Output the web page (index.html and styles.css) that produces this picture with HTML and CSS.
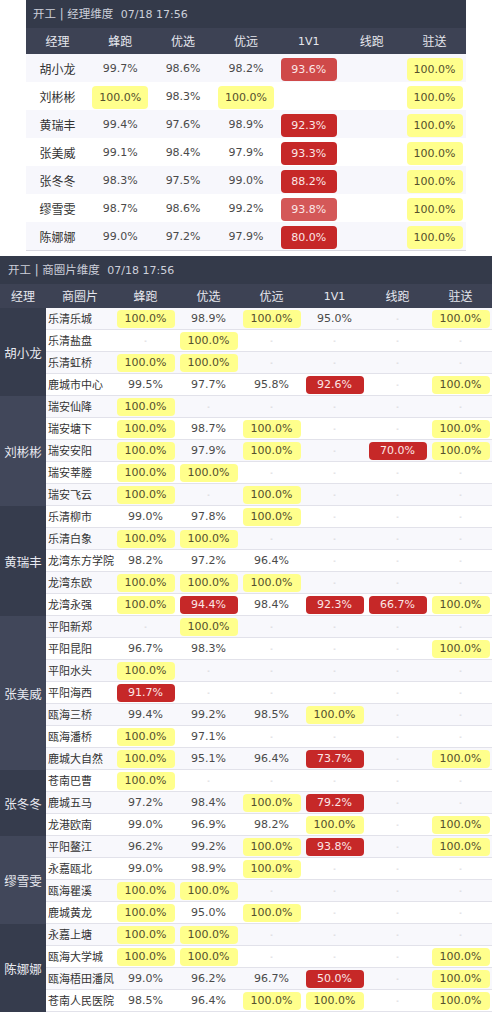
FILE: index.html
```html
<!DOCTYPE html>
<html lang="zh">
<head>
<meta charset="utf-8">
<title>开工</title>
<link rel="stylesheet" href="styles.css">
</head>
<body>
<div class="s1">
  <div class="ttl">开工 | 经理维度 <span class="dt">07/18 17:56</span></div>
  <table class="t1">
    <thead><tr><th>经理</th><th>蜂跑</th><th>优选</th><th>优远</th><th class="en">1V1</th><th>线跑</th><th>驻送</th></tr></thead>
    <tbody>
      <tr><td class="nm">胡小龙</td><td>99.7%</td><td>98.6%</td><td>98.2%</td><td><span class="b r r1">93.6%</span></td><td></td><td><span class="b y">100.0%</span></td></tr>
      <tr><td class="nm">刘彬彬</td><td><span class="b y">100.0%</span></td><td>98.3%</td><td><span class="b y">100.0%</span></td><td></td><td></td><td><span class="b y">100.0%</span></td></tr>
      <tr><td class="nm">黄瑞丰</td><td>99.4%</td><td>97.6%</td><td>98.9%</td><td><span class="b r">92.3%</span></td><td></td><td><span class="b y">100.0%</span></td></tr>
      <tr><td class="nm">张美威</td><td>99.1%</td><td>98.4%</td><td>97.9%</td><td><span class="b r">93.3%</span></td><td></td><td><span class="b y">100.0%</span></td></tr>
      <tr><td class="nm">张冬冬</td><td>98.3%</td><td>97.5%</td><td>99.0%</td><td><span class="b r">88.2%</span></td><td></td><td><span class="b y">100.0%</span></td></tr>
      <tr><td class="nm">缪雪雯</td><td>98.7%</td><td>98.6%</td><td>99.2%</td><td><span class="b r r2">93.8%</span></td><td></td><td><span class="b y">100.0%</span></td></tr>
      <tr><td class="nm">陈娜娜</td><td>99.0%</td><td>97.2%</td><td>97.9%</td><td><span class="b r">80.0%</span></td><td></td><td><span class="b y">100.0%</span></td></tr>
    </tbody>
  </table>
</div>

<div class="s2">
  <div class="ttl">开工 | 商圈片维度 <span class="dt">07/18 17:56</span></div>
  <table class="t2">
    <colgroup><col class="cm"><col class="ca"><col class="cv"><col class="cv"><col class="cv"><col class="cv"><col class="cv"><col class="cv"></colgroup>
    <thead><tr><th>经理</th><th>商圈片</th><th>蜂跑</th><th>优选</th><th>优远</th><th class="en">1V1</th><th>线跑</th><th>驻送</th></tr></thead>
    <tbody>
      <tr><td class="mg" rowspan="4">胡小龙</td><td class="ar">乐清乐城</td><td><span class="b y">100.0%</span></td><td>98.9%</td><td><span class="b y">100.0%</span></td><td>95.0%</td><td><span class="d">-</span></td><td><span class="b y">100.0%</span></td></tr>
      <tr><td class="ar">乐清盐盘</td><td><span class="d">-</span></td><td><span class="b y">100.0%</span></td><td><span class="d">-</span></td><td><span class="d">-</span></td><td><span class="d">-</span></td><td><span class="d">-</span></td></tr>
      <tr><td class="ar">乐清虹桥</td><td><span class="b y">100.0%</span></td><td><span class="b y">100.0%</span></td><td><span class="d">-</span></td><td><span class="d">-</span></td><td><span class="d">-</span></td><td><span class="d">-</span></td></tr>
      <tr><td class="ar">鹿城市中心</td><td>99.5%</td><td>97.7%</td><td>95.8%</td><td><span class="b r">92.6%</span></td><td><span class="d">-</span></td><td><span class="b y">100.0%</span></td></tr>

      <tr><td class="mg l" rowspan="5">刘彬彬</td><td class="ar">瑞安仙降</td><td><span class="b y">100.0%</span></td><td><span class="d">-</span></td><td><span class="d">-</span></td><td><span class="d">-</span></td><td><span class="d">-</span></td><td><span class="d">-</span></td></tr>
      <tr><td class="ar">瑞安塘下</td><td><span class="b y">100.0%</span></td><td>98.7%</td><td><span class="b y">100.0%</span></td><td><span class="d">-</span></td><td><span class="d">-</span></td><td><span class="b y">100.0%</span></td></tr>
      <tr><td class="ar">瑞安安阳</td><td><span class="b y">100.0%</span></td><td>97.9%</td><td><span class="b y">100.0%</span></td><td><span class="d">-</span></td><td><span class="b r">70.0%</span></td><td><span class="b y">100.0%</span></td></tr>
      <tr><td class="ar">瑞安莘塍</td><td><span class="b y">100.0%</span></td><td><span class="b y">100.0%</span></td><td><span class="d">-</span></td><td><span class="d">-</span></td><td><span class="d">-</span></td><td><span class="d">-</span></td></tr>
      <tr><td class="ar">瑞安飞云</td><td><span class="b y">100.0%</span></td><td><span class="d">-</span></td><td><span class="b y">100.0%</span></td><td><span class="d">-</span></td><td><span class="d">-</span></td><td><span class="d">-</span></td></tr>

      <tr><td class="mg" rowspan="5">黄瑞丰</td><td class="ar">乐清柳市</td><td>99.0%</td><td>97.8%</td><td><span class="b y">100.0%</span></td><td><span class="d">-</span></td><td><span class="d">-</span></td><td><span class="d">-</span></td></tr>
      <tr><td class="ar">乐清白象</td><td><span class="b y">100.0%</span></td><td><span class="b y">100.0%</span></td><td><span class="d">-</span></td><td><span class="d">-</span></td><td><span class="d">-</span></td><td><span class="d">-</span></td></tr>
      <tr><td class="ar">龙湾东方学院</td><td>98.2%</td><td>97.2%</td><td>96.4%</td><td><span class="d">-</span></td><td><span class="d">-</span></td><td><span class="d">-</span></td></tr>
      <tr><td class="ar">龙湾东欧</td><td><span class="b y">100.0%</span></td><td><span class="b y">100.0%</span></td><td><span class="b y">100.0%</span></td><td><span class="d">-</span></td><td><span class="d">-</span></td><td><span class="d">-</span></td></tr>
      <tr><td class="ar">龙湾永强</td><td><span class="b y">100.0%</span></td><td><span class="b r">94.4%</span></td><td>98.4%</td><td><span class="b r">92.3%</span></td><td><span class="b r">66.7%</span></td><td><span class="b y">100.0%</span></td></tr>

      <tr><td class="mg l" rowspan="7">张美威</td><td class="ar">平阳新郑</td><td><span class="d">-</span></td><td><span class="b y">100.0%</span></td><td><span class="d">-</span></td><td><span class="d">-</span></td><td><span class="d">-</span></td><td><span class="d">-</span></td></tr>
      <tr><td class="ar">平阳昆阳</td><td>96.7%</td><td>98.3%</td><td><span class="d">-</span></td><td><span class="d">-</span></td><td><span class="d">-</span></td><td><span class="b y">100.0%</span></td></tr>
      <tr><td class="ar">平阳水头</td><td><span class="b y">100.0%</span></td><td><span class="d">-</span></td><td><span class="d">-</span></td><td><span class="d">-</span></td><td><span class="d">-</span></td><td><span class="d">-</span></td></tr>
      <tr><td class="ar">平阳海西</td><td><span class="b r">91.7%</span></td><td><span class="d">-</span></td><td><span class="d">-</span></td><td><span class="d">-</span></td><td><span class="d">-</span></td><td><span class="d">-</span></td></tr>
      <tr><td class="ar">瓯海三桥</td><td>99.4%</td><td>99.2%</td><td>98.5%</td><td><span class="b y">100.0%</span></td><td><span class="d">-</span></td><td><span class="d">-</span></td></tr>
      <tr><td class="ar">瓯海潘桥</td><td><span class="b y">100.0%</span></td><td>97.1%</td><td><span class="d">-</span></td><td><span class="d">-</span></td><td><span class="d">-</span></td><td><span class="d">-</span></td></tr>
      <tr><td class="ar">鹿城大自然</td><td><span class="b y">100.0%</span></td><td>95.1%</td><td>96.4%</td><td><span class="b r">73.7%</span></td><td><span class="d">-</span></td><td><span class="b y">100.0%</span></td></tr>

      <tr><td class="mg" rowspan="3">张冬冬</td><td class="ar">苍南巴曹</td><td><span class="b y">100.0%</span></td><td><span class="d">-</span></td><td><span class="d">-</span></td><td><span class="d">-</span></td><td><span class="d">-</span></td><td><span class="d">-</span></td></tr>
      <tr><td class="ar">鹿城五马</td><td>97.2%</td><td>98.4%</td><td><span class="b y">100.0%</span></td><td><span class="b r">79.2%</span></td><td><span class="d">-</span></td><td><span class="d">-</span></td></tr>
      <tr><td class="ar">龙港欧南</td><td>99.0%</td><td>96.9%</td><td>98.2%</td><td><span class="b y">100.0%</span></td><td><span class="d">-</span></td><td><span class="b y">100.0%</span></td></tr>

      <tr><td class="mg l" rowspan="4">缪雪雯</td><td class="ar">平阳鳌江</td><td>96.2%</td><td>99.2%</td><td><span class="b y">100.0%</span></td><td><span class="b r">93.8%</span></td><td><span class="d">-</span></td><td><span class="b y">100.0%</span></td></tr>
      <tr><td class="ar">永嘉瓯北</td><td>99.0%</td><td>98.9%</td><td><span class="b y">100.0%</span></td><td><span class="d">-</span></td><td><span class="d">-</span></td><td><span class="d">-</span></td></tr>
      <tr><td class="ar">瓯海瞿溪</td><td><span class="b y">100.0%</span></td><td><span class="b y">100.0%</span></td><td><span class="d">-</span></td><td><span class="d">-</span></td><td><span class="d">-</span></td><td><span class="d">-</span></td></tr>
      <tr><td class="ar">鹿城黄龙</td><td><span class="b y">100.0%</span></td><td>95.0%</td><td><span class="b y">100.0%</span></td><td><span class="d">-</span></td><td><span class="d">-</span></td><td><span class="d">-</span></td></tr>

      <tr><td class="mg" rowspan="4">陈娜娜</td><td class="ar">永嘉上塘</td><td><span class="b y">100.0%</span></td><td><span class="b y">100.0%</span></td><td><span class="d">-</span></td><td><span class="d">-</span></td><td><span class="d">-</span></td><td><span class="d">-</span></td></tr>
      <tr><td class="ar">瓯海大学城</td><td><span class="b y">100.0%</span></td><td><span class="b y">100.0%</span></td><td><span class="d">-</span></td><td><span class="d">-</span></td><td><span class="d">-</span></td><td><span class="b y">100.0%</span></td></tr>
      <tr><td class="ar">瓯海梧田潘凤</td><td>99.0%</td><td>96.2%</td><td>96.7%</td><td><span class="b r">50.0%</span></td><td><span class="d">-</span></td><td><span class="b y">100.0%</span></td></tr>
      <tr><td class="ar">苍南人民医院</td><td>98.5%</td><td>96.4%</td><td><span class="b y">100.0%</span></td><td><span class="b y">100.0%</span></td><td><span class="d">-</span></td><td><span class="b y">100.0%</span></td></tr>
    </tbody>
  </table>
</div>
</body>
</html>
```

FILE: styles.css
```css
html, body {
  margin: 0;
  padding: 0;
  background: #ffffff;
}
body {
  font-family: "DejaVu Sans", "Noto Sans CJK SC", sans-serif;
  color: #444;
}

.ttl {
  height: 28px;
  line-height: 28px;
  background: #343a4a;
  color: #cdd0da;
  font-size: 11.5px;
  white-space: nowrap;
  overflow: hidden;
}
.ttl .dt {
  margin-left: 4px;
  font-size: 11px;
}

table {
  border-collapse: separate;
  border-spacing: 0;
  table-layout: fixed;
  width: 100%;
}
th {
  padding: 0;
  font-weight: normal;
  font-size: 12px;
  line-height: 14px;
  color: #e6e7ee;
  background: #3d4254;
  font-family: "Noto Sans CJK SC", sans-serif;
  vertical-align: middle;
}
th.en {
  font-family: "DejaVu Sans", sans-serif;
  font-size: 11px;
  line-height: 14px;
  padding-top: 2px;
}
td {
  padding: 0;
  text-align: center;
  font-size: 11px;
  line-height: 13px;
  color: #4a4a4a;
  white-space: nowrap;
  vertical-align: middle;
}

.b {
  display: inline-block;
  border-radius: 4px;
  text-align: center;
  vertical-align: middle;
}
.y { background: #ffff8c; color: #55502c; }
.r { background: #c62828; color: #fbe6e6; }
.r1 { background: #cf4949; }
.r2 { background: #d45858; }

.d {
  font-size: 7px;
  color: #b8b8c0;
}

/* section 1 */
.s1 {
  width: 440px;
  margin: 0 auto;
}
.s1 .ttl { padding-left: 7px; }
.t1 th { height: 26px; }
.t1 th.en { height: 24px; }
.t1 td { height: 28px; }
.t1 tbody tr:nth-child(odd) td { background: #f7f7fc; }
.t1 tbody tr:last-child td { border-bottom: 1px solid #d8d8e0; }
.t1 td.nm {
  font-family: "Noto Sans CJK SC", sans-serif;
  font-size: 12px;
  color: #333;
}
.t1 .b { width: 56px; height: 23px; line-height: 23px; margin-top: 2px; }

/* section 2 */
.s2 { margin-top: 5px; }
.s2 .ttl { padding-left: 8px; }
.t2 col.cm { width: 46px; }
.t2 col.ca { width: 68px; }
.t2 col.cv { width: 63px; }
.t2 th { height: 24px; }
.t2 th.en { height: 22px; }
.t2 td {
  height: 21px;
  border-bottom: 1px solid #e2e2ea;
}
.t2 tbody tr:nth-child(odd) td { background: #f8f8fc; }
.t2 td.mg, .t2 tbody tr:nth-child(odd) td.mg {
  background: #363c4d;
  color: #e8e9f0;
  font-family: "Noto Sans CJK SC", sans-serif;
  font-size: 12.5px;
  border-bottom: none;
}
.t2 td.mg.l, .t2 tbody tr:nth-child(odd) td.mg.l { background: #41475a; }
.t2 td.ar {
  text-align: left;
  padding-left: 2px;
  font-family: "Noto Sans CJK SC", sans-serif;
  font-size: 11px;
  color: #333;
}
.t2 .b { width: 58px; height: 18px; line-height: 18px; margin-top: 1px; }
```
